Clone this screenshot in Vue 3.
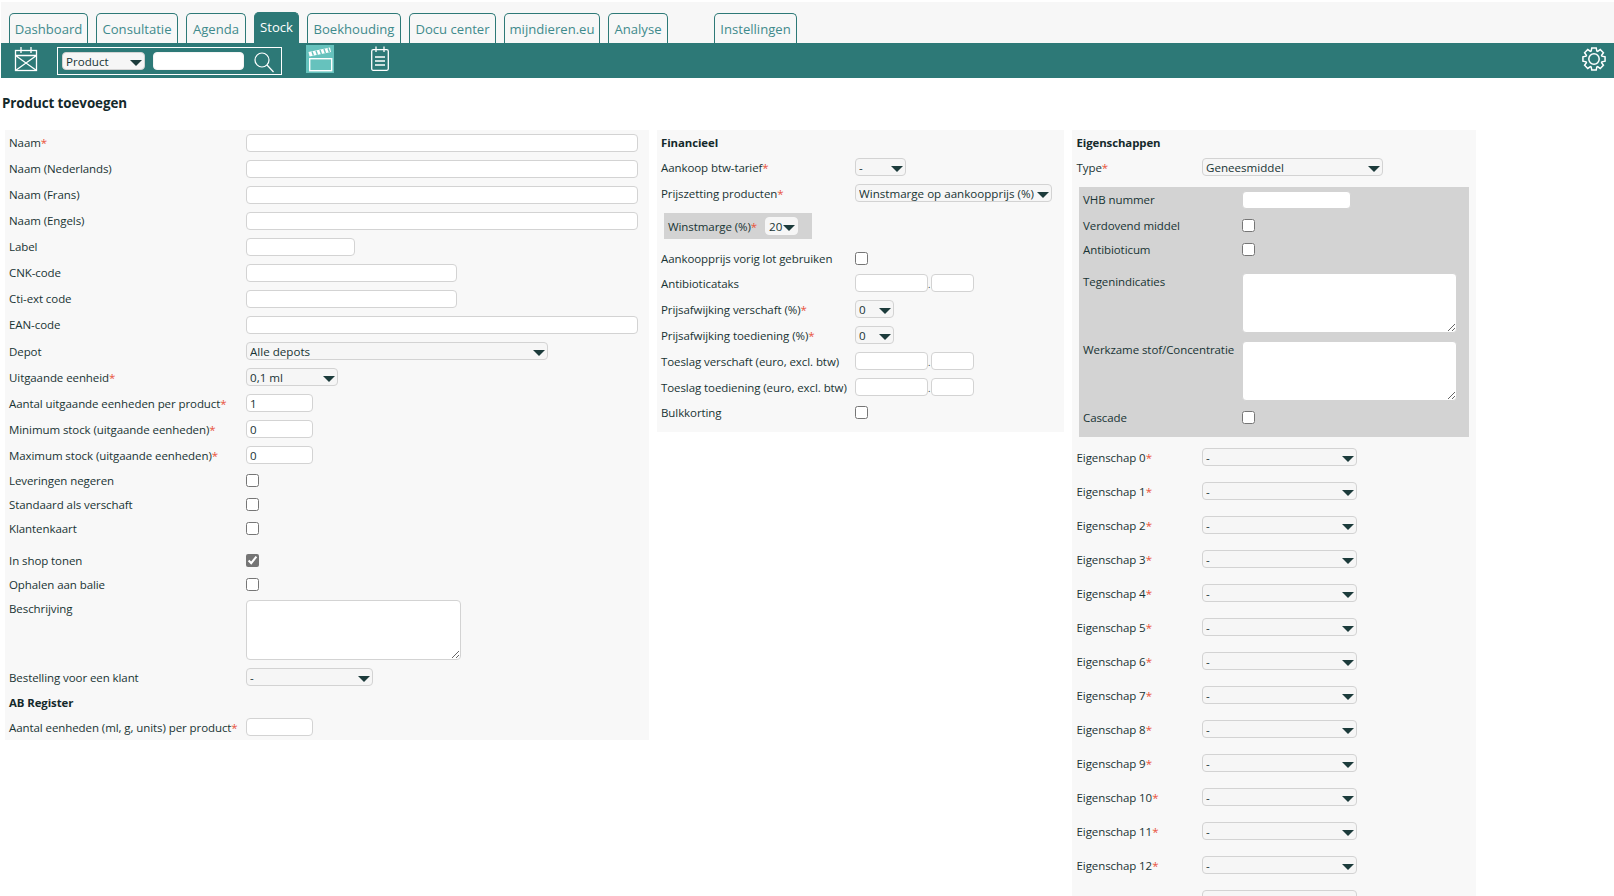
<script setup>
const tabs = [
  { name: 'Dashboard', w: 79 },
  { name: 'Consultatie', w: 82 },
  { name: 'Agenda', w: 60 },
  { name: 'Stock', w: 45, active: true },
  { name: 'Boekhouding', w: 94 },
  { name: 'Docu center', w: 87 },
  { name: 'mijndieren.eu', w: 96 },
  { name: 'Analyse', w: 60 },
  { name: 'Instellingen', w: 83, far: true }
]
const nameRows = [
  { label: 'Naam', req: true, cls: 'w-full' },
  { label: 'Naam (Nederlands)', cls: 'w-full' },
  { label: 'Naam (Frans)', cls: 'w-full' },
  { label: 'Naam (Engels)', cls: 'w-full' },
  { label: 'Label', cls: 'w-label' },
  { label: 'CNK-code', cls: 'w-code' },
  { label: 'Cti-ext code', cls: 'w-code' },
  { label: 'EAN-code', cls: 'w-full' }
]
const stockRows = [
  { label: 'Aantal uitgaande eenheden per product', value: '1' },
  { label: 'Minimum stock (uitgaande eenheden)', value: '0' },
  { label: 'Maximum stock (uitgaande eenheden)', value: '0' }
]
const props = Array.from({ length: 14 }, (_, i) => 'Eigenschap ' + i)

// Eight-toothed gear outline, centred on 12,12 in a 24 box.
const gearPath = (() => {
  const pts = []
  for (let i = 0; i < 8; i++) {
    const a = (i * Math.PI) / 4
    for (const [r, d] of [[8.4, -0.34], [11.3, -0.2], [11.3, 0.2], [8.4, 0.34]]) {
      pts.push((12 + r * Math.sin(a + d)).toFixed(2) + ' ' + (12 - r * Math.cos(a + d)).toFixed(2))
    }
  }
  return 'M' + pts.join('L') + 'Z'
})()
</script>

<template>
  <div class="app">
    <nav class="tabs">
      <a
        v-for="t in tabs"
        :key="t.name"
        class="tab"
        :class="{ active: t.active, far: t.far }"
        :style="{ width: t.w + 'px' }"
      >{{ t.name }}</a>
    </nav>

    <div class="toolbar">
      <svg class="ico-cal" width="24" height="26" viewBox="0 0 24 26" fill="none" stroke="#fff" stroke-width="1.3">
        <rect x="1.5" y="4.5" width="21" height="20" />
        <path d="M1.5 9.5h21M7 1v6M17 1v6M1.5 9.5l21 15M22.5 9.5l-21 15" />
      </svg>
      <div class="search">
        <div class="sel sel-product">
          <select><option>Product</option></select>
        </div>
        <input class="search-input" type="text" />
        <svg width="20" height="21" viewBox="0 0 20 21" fill="none" stroke="#fff" stroke-width="1.2">
          <circle cx="8" cy="8" r="7" />
          <path d="M13 13l6.5 7" />
        </svg>
      </div>
      <div class="clapper">
        <svg width="28" height="28" viewBox="0 0 28 28" fill="none" stroke="#fff" stroke-width="1.4">
          <rect x="3.7" y="13.7" width="22" height="12" />
          <path d="M2.5 7L24 2.5l1 4.5L3.5 11.5z" fill="#fff" stroke="none" />
          <path d="M6 6.5l1.4 4M10 5.7l1.4 4M14 4.9l1.4 4M18 4l1.4 4M22 3.2l1.4 4" stroke="#66c2bd" stroke-width="1.4" />
        </svg>
      </div>
      <svg class="ico-note" width="18" height="25" viewBox="0 0 18 25" fill="none" stroke="#fff" stroke-width="1.3">
        <rect x="0.7" y="3.7" width="16.6" height="20.6" rx="1.5" />
        <path d="M5 0.5v5.5M13 0.5v5.5M4 11h10M4 15h10M4 19h10" />
      </svg>
      <svg class="ico-gear" width="24" height="24" viewBox="0 0 24 24" fill="none" stroke="#fff" stroke-width="1.5">
        <circle cx="12" cy="12" r="5.2" />
        <path :d="gearPath" stroke-linejoin="miter" />
      </svg>
    </div>

    <h1 class="title">Product toevoegen</h1>

    <main class="columns">
      <section class="panel p1">
        <div v-for="r in nameRows" :key="r.label" class="row flat">
          <label>{{ r.label }}<i v-if="r.req">*</i></label>
          <input type="text" :class="r.cls" />
        </div>
        <div class="row">
          <label>Depot</label>
          <div class="sel w-depot"><select><option>Alle depots</option></select></div>
        </div>
        <div class="row">
          <label>Uitgaande eenheid<i>*</i></label>
          <div class="sel w-unit"><select><option>0,1 ml</option></select></div>
        </div>
        <div v-for="r in stockRows" :key="r.label" class="row">
          <label>{{ r.label }}<i>*</i></label>
          <input type="text" class="w-small" :value="r.value" />
        </div>
        <div class="row cb"><label>Leveringen negeren</label><input type="checkbox" /></div>
        <div class="row cb"><label>Standaard als verschaft</label><input type="checkbox" /></div>
        <div class="row cb"><label>Klantenkaart</label><input type="checkbox" /></div>
        <div class="spacer"></div>
        <div class="row cb"><label>In shop tonen</label><input type="checkbox" checked /></div>
        <div class="row cb"><label>Ophalen aan balie</label><input type="checkbox" /></div>
        <div class="row area"><label>Beschrijving</label><textarea></textarea></div>
        <div class="row">
          <label>Bestelling voor een klant</label>
          <div class="sel w-order"><select><option>-</option></select></div>
        </div>
        <h2 class="heading">AB Register</h2>
        <div class="row last">
          <label>Aantal eenheden (ml, g, units) per product<i>*</i></label>
          <input type="text" class="w-small" />
        </div>
      </section>

      <section class="panel p2">
        <h2 class="heading">Financieel</h2>
        <div class="row">
          <label>Aankoop btw-tarief<i>*</i></label>
          <div class="sel w-vat"><select><option>-</option></select></div>
        </div>
        <div class="row">
          <label>Prijszetting producten<i>*</i></label>
          <div class="sel w-pricing"><select><option>Winstmarge op aankoopprijs (%)</option></select></div>
        </div>
        <div class="margin-box">
          <span class="margin-label">Winstmarge (%)<i>*</i></span>
          <div class="sel w-margin"><select><option>20</option></select></div>
        </div>
        <div class="row cb"><label>Aankoopprijs vorig lot gebruiken</label><input type="checkbox" /></div>
        <div class="row">
          <label>Antibioticataks</label>
          <input type="text" class="w-euro" /><span class="dot">.</span><input type="text" class="w-cent" />
        </div>
        <div class="row">
          <label>Prijsafwijking verschaft (%)<i>*</i></label>
          <div class="sel w-dev"><select><option>0</option></select></div>
        </div>
        <div class="row">
          <label>Prijsafwijking toediening (%)<i>*</i></label>
          <div class="sel w-dev"><select><option>0</option></select></div>
        </div>
        <div class="row">
          <label>Toeslag verschaft (euro, excl. btw)</label>
          <input type="text" class="w-euro" /><span class="dot">.</span><input type="text" class="w-cent" />
        </div>
        <div class="row">
          <label>Toeslag toediening (euro, excl. btw)</label>
          <input type="text" class="w-euro" /><span class="dot">.</span><input type="text" class="w-cent" />
        </div>
        <div class="row cb"><label>Bulkkorting</label><input type="checkbox" /></div>
      </section>

      <section class="panel p3">
        <h2 class="heading">Eigenschappen</h2>
        <div class="row type">
          <label>Type<i>*</i></label>
          <div class="sel w-type"><select><option>Geneesmiddel</option></select></div>
        </div>
        <div class="med-box">
          <div class="row flat"><label>VHB nummer</label><input type="text" class="w-vhb" /></div>
          <div class="row cb"><label>Verdovend middel</label><input type="checkbox" /></div>
          <div class="row cb"><label>Antibioticum</label><input type="checkbox" /></div>
          <div class="spacer"></div>
          <div class="row area"><label>Tegenindicaties</label><textarea></textarea></div>
          <div class="row area"><label>Werkzame stof/Concentratie</label><textarea></textarea></div>
          <div class="row cb"><label>Cascade</label><input type="checkbox" /></div>
        </div>
        <div v-for="p in props" :key="p" class="row prop">
          <label>{{ p }}<i>*</i></label>
          <div class="sel w-prop"><select><option>-</option></select></div>
        </div>
      </section>
    </main>
  </div>
</template>

<style>
html, body { margin: 0; background: #fff; overflow: hidden; }
</style>

<style scoped>
.app {
  height: 896px;
  overflow: hidden;
  padding: 2px 0 0 1px;
  box-sizing: border-box;
  font-family: "Open Sans", "Noto Sans", sans-serif;
  font-size: 11.5px;
  letter-spacing: -0.08px;
  color: #183434;
}
.tabs {
  display: flex;
  align-items: flex-end;
  gap: 8px;
  height: 41px;
  padding-left: 8px;
  background: #f7f7f7;
  letter-spacing: 0;
}
.tab {
  box-sizing: border-box;
  height: 30px;
  line-height: 31px;
  text-align: center;
  border: 1px solid #2d7977;
  border-bottom: 0;
  border-radius: 5px 5px 0 0;
  color: #3f8a8c;
  font-size: 13.1px;
  white-space: nowrap;
}
.tab.active {
  height: 31px;
  line-height: 29px;
  background: #2d7977;
  color: #fff;
}
.tab.far { margin-left: 38px; }

.toolbar {
  display: flex;
  align-items: flex-start;
  height: 35px;
  background: #2d7977;
}
.ico-cal { margin: 3px 0 0 13px; }
.search {
  display: flex;
  align-items: flex-start;
  box-sizing: border-box;
  width: 225px;
  height: 28px;
  margin: 4px 0 0 19px;
  padding: 4px 0 0 4px;
  border: 1px solid #fff;
}
.search svg { margin: 0 0 0 10px; }
.sel-product { width: 83px; }
.search input.search-input {
  width: 91px;
  margin-left: 8px;
  border-color: #f4f4f4;
}
.clapper {
  width: 28px;
  height: 28px;
  margin: 2px 0 0 24px;
  background: #66c2bd;
}
.clapper svg { display: block; }
.ico-note { margin: 3px 0 0 37px; }
.ico-gear { margin: 4px 8px 0 auto; }

.title {
  margin: 0;
  padding: 16px 0 0 1px;
  height: 36px;
  box-sizing: content-box;
  font-size: 13.4px;
  line-height: 18px;
  font-weight: 700;
  color: #14292b;
}
.columns {
  display: flex;
  align-items: flex-start;
  gap: 8px;
  margin-left: 4px;
}
.panel {
  box-sizing: border-box;
  padding-top: 4px;
  background: #f8f8f8;
}
.p1 { width: 644px; padding-left: 4px; --label: 237px; }
.p2 { width: 407px; padding: 4px 0 4px 4px; --label: 194px; }
.p3 { width: 404px; padding-left: 4.5px; --label: 125.5px; }

.row {
  display: flex;
  align-items: flex-start;
  height: 26px;
}
.row label {
  flex: none;
  box-sizing: border-box;
  width: var(--label);
  padding-top: 1px;
  line-height: 18px;
  white-space: nowrap;
}
.flat label, .cb label, .area label { padding-top: 0; }
i { color: #e8533c; font-style: normal; }
.cb { height: 24px; }
.area { height: 68px; }
.last { height: 22px; }
.prop { height: 34px; }
.spacer { height: 8px; }

.heading {
  box-sizing: border-box;
  margin: 0;
  height: 24px;
  font-size: 11.4px;
  line-height: 18px;
  font-weight: 700;
  color: #14292b;
}

input[type="text"], textarea {
  box-sizing: border-box;
  height: 18px;
  margin: 0;
  padding: 0 3px;
  border: 1px solid #d3d3d3;
  border-radius: 4px;
  background: #fff;
  font: inherit;
  color: inherit;
  outline: none;
}
input[type="checkbox"] {
  width: 13px;
  height: 13px;
  margin: 2px 0 0 0;
  accent-color: #757575;
}
textarea {
  width: 215px;
  height: 60px;
  margin: 0;
}
.w-full { width: 392px; }
.w-label { width: 109px; }
.w-code { width: 211px; }
.w-small { width: 67px; }
.w-euro { width: 73px; }
.w-cent { width: 43px; }
.w-vhb { width: 109px; }
.dot { width: 3px; line-height: 22px; font-size: 9px; }

.sel {
  position: relative;
  height: 18px;
}
.sel select {
  display: block;
  box-sizing: border-box;
  width: 100%;
  height: 18px;
  padding: 0 0 0 3px;
  border: 1px solid #d3d3d3;
  border-radius: 4px;
  background: #f6f6f6;
  font: inherit;
  font-size: 11.6px;
  color: inherit;
  appearance: none;
  outline: none;
}
.sel::after {
  content: "";
  position: absolute;
  right: 3px;
  top: 8px;
  border-style: solid;
  border-width: 6px 6px 0;
  border-color: #1c3b3b transparent transparent;
  pointer-events: none;
}
.w-depot { width: 302px; }
.w-unit { width: 92px; }
.w-order { width: 127px; }
.w-vat { width: 51px; }
.w-pricing { width: 197px; }
.w-dev { width: 39px; }
.w-type { width: 181px; }
.w-prop { width: 155px; }

.margin-box {
  display: flex;
  align-items: center;
  box-sizing: border-box;
  width: 148px;
  height: 26px;
  margin: 3px 0 11px 3px;
  padding-left: 4px;
  background: #d3d3d3;
}
.margin-label { flex: none; width: 97px; }
.w-margin { width: 33px; }
.w-margin select { border-color: #f6f6f6; }

.type { height: 29px; }
.med-box {
  box-sizing: border-box;
  width: 390px;
  height: 250px;
  margin: 0 0 11px 2.5px;
  padding: 4px 0 0 4px;
  background: #d3d3d3;
  --label: 159px;
}
</style>
